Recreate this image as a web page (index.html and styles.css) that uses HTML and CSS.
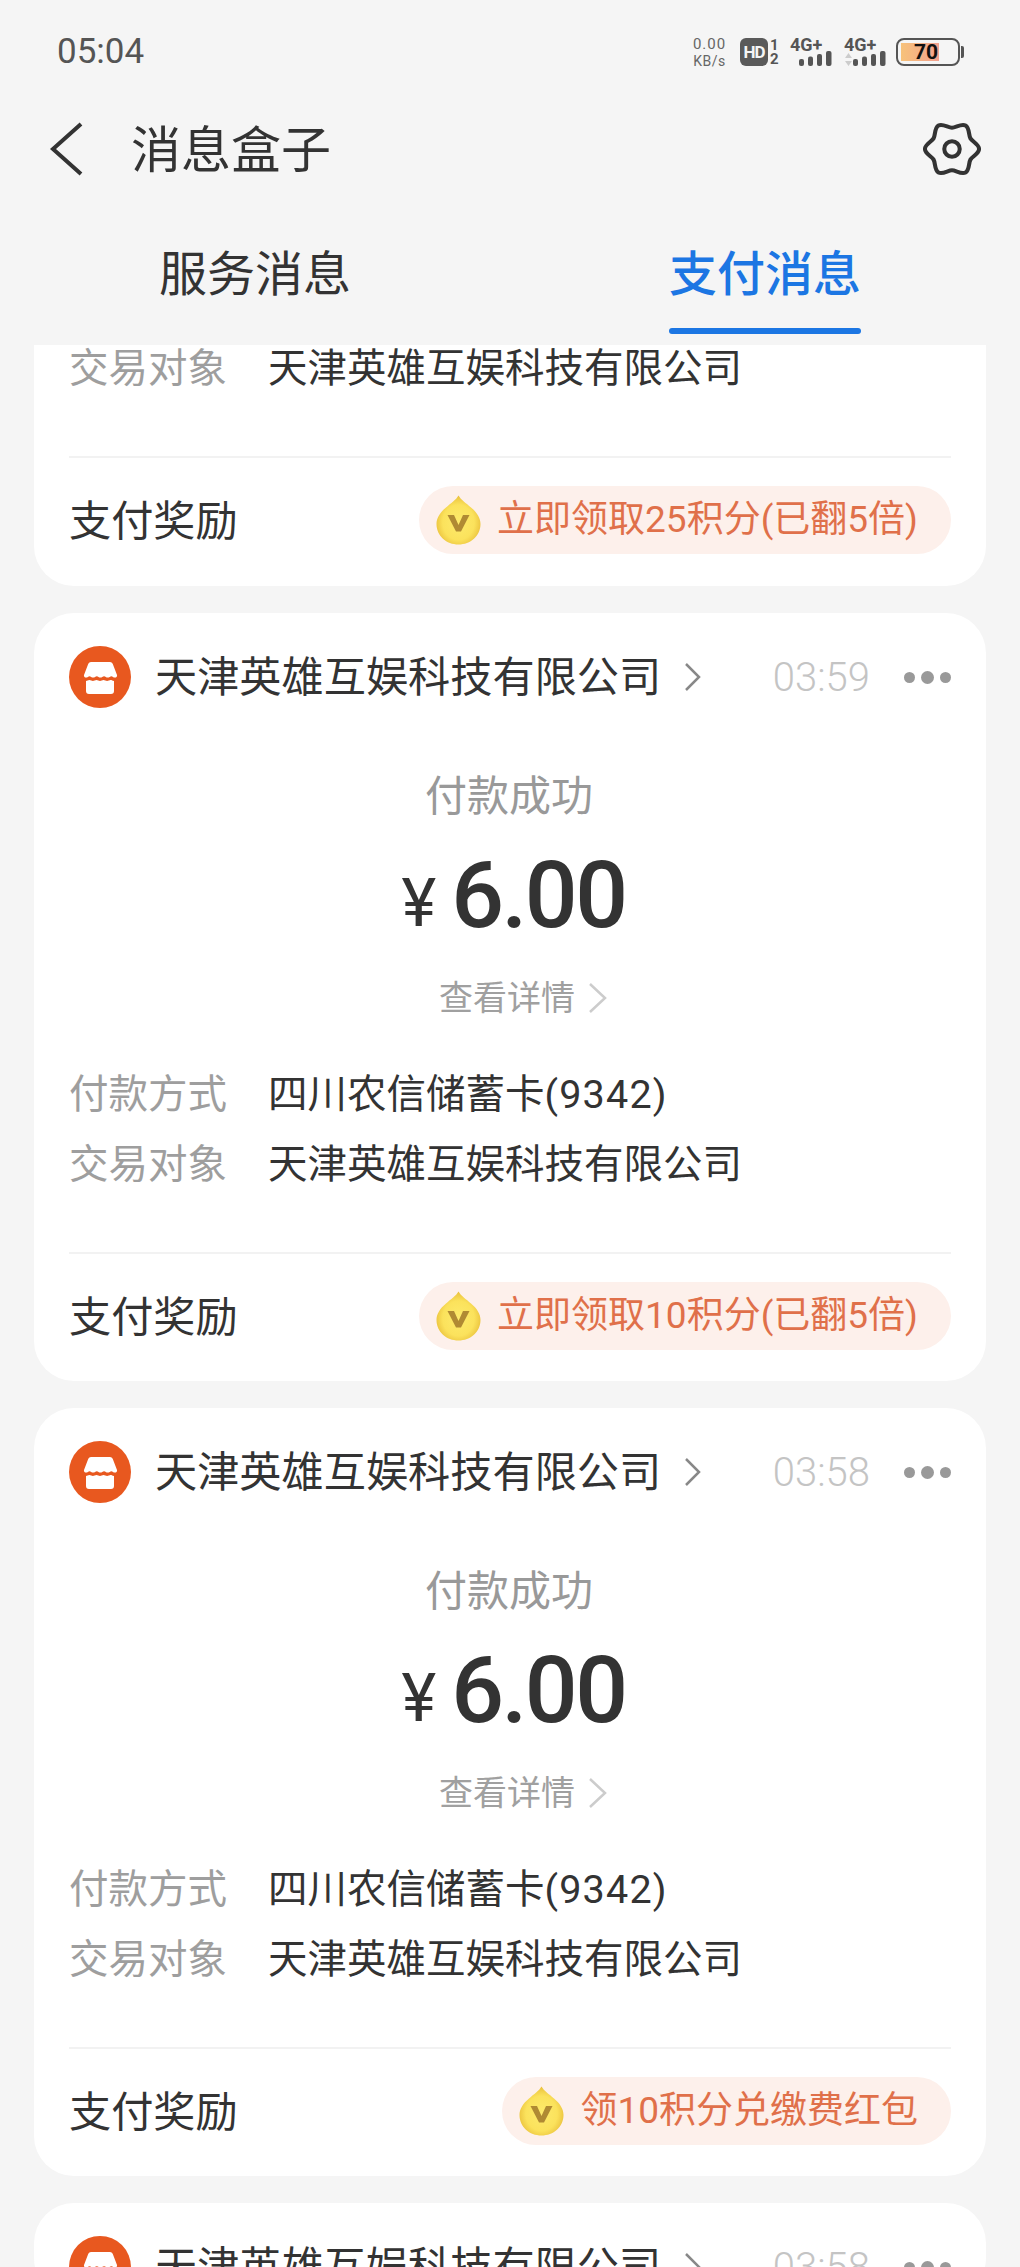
FILE: index.html
```html
<!DOCTYPE html>
<html lang="zh-CN">
<head>
<meta charset="utf-8">
<title>消息盒子</title>
<link rel="stylesheet" href="styles.css">
</head>
<body>
<svg class="defs" width="0" height="0" aria-hidden="true">
  <defs>
    <radialGradient id="coinFill" cx="50%" cy="55%" r="55%">
      <stop offset="0%" stop-color="#fdea6c"/>
      <stop offset="65%" stop-color="#fbe25c"/>
      <stop offset="100%" stop-color="#e9bf3a"/>
    </radialGradient>
    <symbol id="store" viewBox="0 0 62 62">
      <circle cx="31" cy="31" r="31" fill="#e8581f"/>
      <path d="M22 16h19a3 3 0 0 1 2.700 1.700L48 29c.4 1.400-.6 2.600-2 2.600-1.600 0-2.500-1.400-3.600-1.400s-2.200 1.400-3.700 1.400-2.300-1.400-3.600-1.400-2.300 1.400-3.700 1.400-2.400-1.400-3.600-1.400-2.200 1.400-3.700 1.400-2.500-1.400-3.600-1.400-2 1.400-3.500 1.400c-1.400 0-2.400-1.200-2-2.600l4.300-11.300A3 3 0 0 1 22 16z" fill="#fff"/>
      <path d="M17 35c1.200 0 2.100-1 3.400-1s2.400 1 3.500 1 2.400-1 3.600-1 2.300 1 3.500 1 2.300-1 3.500-1 2.400 1 3.600 1 2.400-1 3.500-1 1.900.7 3.400 1v10a3 3 0 0 1-3 3H20a3 3 0 0 1-3-3z" fill="#fff"/>
    </symbol>
    <symbol id="coin" viewBox="0 0 45 50">
      <path d="M22.500.5C25 5 30 8 35 12.500 41 17.500 44.500 23 44.500 29 44.500 41 34.500 49.500 22.500 49.500 10.500 49.500.5 41 .5 29 .5 23 4 17.500 10 12.500 15 8 20 5 22.500.5z" fill="url(#coinFill)"/>
      <path d="M11.500 20h6.500l4.500 10 4.500-10h6.500l-8.500 16.500h-5z" fill="#b08a33"/>
    </symbol>
    <symbol id="bars" viewBox="0 0 33 15">
      <rect x="0" y="8" width="5" height="7" rx="2" fill="#555"/>
      <rect x="9" y="5.500" width="5" height="9.500" rx="2" fill="#555"/>
      <rect x="18" y="3" width="5" height="12" rx="2" fill="#555"/>
      <rect x="27" y="0" width="5.500" height="15" rx="2" fill="#555"/>
    </symbol>
  </defs>
</svg>

<div class="screen">
  <header class="top">
    <div class="status">
      <span class="clock">05:04</span>
      <div class="status-icons">
        <div class="speed"><span class="speed-num">0.00</span><span class="speed-unit">KB/s</span></div>
        <div class="hd"><span class="hd-box">HD</span><span class="hd-sims"><span>1</span><span>2</span></span></div>
        <div class="signal"><span class="signal-label">4G+</span><svg class="signal-bars" width="33" height="15"><use href="#bars"/></svg></div>
        <div class="signal signal-second"><span class="signal-label">4G+</span><svg class="signal-arrows" width="7" height="13" viewBox="0 0 7 13"><path d="M3.500 0 7 5H0zM3.500 13 0 8h7z" fill="#ccc"/></svg><svg class="signal-bars" width="33" height="15"><use href="#bars"/></svg></div>
        <div class="battery"><div class="battery-body"><span class="battery-fill">70</span></div><span class="battery-tip"></span></div>
      </div>
    </div>

    <div class="titlebar">
      <svg class="back" width="36" height="54" viewBox="0 0 36 54"><path d="M32 2 4 27l28 25" fill="none" stroke="#333" stroke-width="4"/></svg>
      <h1 class="title">消息盒子</h1>
      <svg class="gear" width="58" height="58" viewBox="0 0 60 60"><path d="M58 30C58 34.900 51.050 37.540 49.050 41 47.050 44.460 48.240 51.800 44 54.250 39.760 56.700 34 52 30 52 26 52 20.240 56.700 16 54.250 11.760 51.800 12.950 44.460 10.950 41 8.950 37.540 2 34.900 2 30 2 25.100 8.950 22.460 10.950 19 12.950 15.540 11.760 8.200 16 5.750 20.240 3.300 26 8 30 8 34 8 39.760 3.300 44 5.750 48.240 8.200 47.050 15.540 49.050 19 51.050 22.460 58 25.100 58 30Z" fill="none" stroke="#333" stroke-width="4.200"/><circle cx="30" cy="30" r="8" fill="none" stroke="#333" stroke-width="4.200"/></svg>
    </div>

    <nav class="tabs">
      <div class="tab-cell"><span class="tab">服务消息</span></div>
      <div class="tab-cell"><span class="tab tab-active">支付消息</span></div>
    </nav>
  </header>

  <main class="list">
    <section class="card card-partial">
      <div class="rows">
        <div class="row"><span class="row-label">交易对象</span><span class="row-value">天津英雄互娱科技有限公司</span></div>
      </div>
      <div class="reward">
        <span class="reward-label">支付奖励</span>
        <span class="pill"><svg class="coin" width="45" height="50"><use href="#coin"/></svg>立即领取25积分(已翻5倍)</span>
      </div>
    </section>

    <section class="card">
      <div class="card-head">
        <svg class="store" width="62" height="62"><use href="#store"/></svg>
        <span class="merchant">天津英雄互娱科技有限公司</span>
        <svg class="head-chevron" width="17" height="30" viewBox="0 0 17 30"><path d="M2 2l13 13L2 28" fill="none" stroke="#888" stroke-width="2.500"/></svg>
        <span class="time">03:59</span>
        <span class="dots"><i></i><i class="dot-mid"></i><i></i></span>
      </div>
      <div class="pay">
        <div class="pay-status">付款成功</div>
        <div class="amount"><span class="currency">¥</span><span class="money">6.00</span></div>
        <div class="detail">查看详情<svg class="detail-chevron" width="19" height="32" viewBox="0 0 19 32"><path d="M2 2l15 14L2 30" fill="none" stroke="#ccc" stroke-width="2.500"/></svg></div>
      </div>
      <div class="rows">
        <div class="row"><span class="row-label">付款方式</span><span class="row-value">四川农信储蓄卡<span class="card-no">(9342)</span></span></div>
        <div class="row"><span class="row-label">交易对象</span><span class="row-value">天津英雄互娱科技有限公司</span></div>
      </div>
      <div class="reward">
        <span class="reward-label">支付奖励</span>
        <span class="pill"><svg class="coin" width="45" height="50"><use href="#coin"/></svg>立即领取10积分(已翻5倍)</span>
      </div>
    </section>

    <section class="card">
      <div class="card-head">
        <svg class="store" width="62" height="62"><use href="#store"/></svg>
        <span class="merchant">天津英雄互娱科技有限公司</span>
        <svg class="head-chevron" width="17" height="30" viewBox="0 0 17 30"><path d="M2 2l13 13L2 28" fill="none" stroke="#888" stroke-width="2.500"/></svg>
        <span class="time">03:58</span>
        <span class="dots"><i></i><i class="dot-mid"></i><i></i></span>
      </div>
      <div class="pay">
        <div class="pay-status">付款成功</div>
        <div class="amount"><span class="currency">¥</span><span class="money">6.00</span></div>
        <div class="detail">查看详情<svg class="detail-chevron" width="19" height="32" viewBox="0 0 19 32"><path d="M2 2l15 14L2 30" fill="none" stroke="#ccc" stroke-width="2.500"/></svg></div>
      </div>
      <div class="rows">
        <div class="row"><span class="row-label">付款方式</span><span class="row-value">四川农信储蓄卡<span class="card-no">(9342)</span></span></div>
        <div class="row"><span class="row-label">交易对象</span><span class="row-value">天津英雄互娱科技有限公司</span></div>
      </div>
      <div class="reward">
        <span class="reward-label">支付奖励</span>
        <span class="pill"><svg class="coin" width="45" height="50"><use href="#coin"/></svg>领10积分兑缴费红包</span>
      </div>
    </section>

    <section class="card">
      <div class="card-head">
        <svg class="store" width="62" height="62"><use href="#store"/></svg>
        <span class="merchant">天津英雄互娱科技有限公司</span>
        <svg class="head-chevron" width="17" height="30" viewBox="0 0 17 30"><path d="M2 2l13 13L2 28" fill="none" stroke="#888" stroke-width="2.500"/></svg>
        <span class="time">03:58</span>
        <span class="dots"><i></i><i class="dot-mid"></i><i></i></span>
      </div>
    </section>
  </main>
</div>
</body>
</html>
```

FILE: styles.css
```css
* { box-sizing: border-box; }

html, body {
  margin: 0;
  padding: 0;
  height: 100%;
  background: #f5f5f5;
}

body {
  font-family: Roboto, "Noto Sans CJK SC", sans-serif;
  color: #333;
  overflow: hidden;
}

.defs { position: absolute; }

.screen {
  width: 1020px;
  height: 2267px;
  display: flex;
  flex-direction: column;
  overflow: hidden;
}

.top { flex: none; }

/* status bar */
.status {
  height: 104px;
  padding: 0 56px 0 57px;
  display: flex;
  align-items: center;
  justify-content: space-between;
}

.clock {
  font-size: 35px;
  line-height: 40px;
  color: #555;
}

.status-icons {
  display: flex;
  align-items: center;
  height: 28px;
}

.speed {
  width: 35px;
  margin-right: 13px;
  display: flex;
  flex-direction: column;
  align-items: center;
  color: #666;
}
.speed-num {
  font-size: 15px;
  line-height: 18px;
  letter-spacing: 1px;
}
.speed-unit {
  font-size: 14px;
  line-height: 17px;
  letter-spacing: 0.500px;
}

.hd {
  display: flex;
  align-items: stretch;
  height: 28px;
  margin-right: 12px;
}
.hd-box {
  width: 28px;
  height: 28px;
  border-radius: 6px;
  background: #5a5a5a;
  color: #f5f5f5;
  font-size: 17px;
  font-weight: 700;
  line-height: 28px;
  text-align: center;
  letter-spacing: -1px;
}
.hd-sims {
  display: flex;
  flex-direction: column;
  justify-content: space-between;
  margin-left: 2px;
  width: 8px;
  font-size: 15px;
  font-weight: 700;
  line-height: 14px;
  color: #555;
}

.signal {
  width: 42px;
  height: 28px;
  display: flex;
  flex-direction: column;
  position: relative;
  margin-right: 12px;
}
.signal-second { margin-right: 10px; }
.signal-label {
  font-size: 18px;
  font-weight: 700;
  line-height: 13px;
  height: 13px;
  color: #555;
}
.signal-bars {
  display: block;
  margin-left: 9px;
}
.signal-arrows {
  position: absolute;
  left: 1px;
  top: 15px;
}

.battery {
  display: flex;
  align-items: center;
}
.battery-body {
  width: 64px;
  height: 28px;
  padding: 3px;
  border: 2px solid #555;
  border-radius: 8px;
  display: flex;
}
.battery-fill {
  width: 38px;
  height: 18px;
  padding-right: 1px;
  background: linear-gradient(90deg, #f7c27a 0%, #f2a08f 100%);
  color: #111;
  font-size: 21px;
  font-weight: 700;
  line-height: 18px;
  text-align: right;
}
.battery-tip {
  width: 3px;
  height: 12px;
  margin-left: 1px;
  background: #555;
  border-radius: 0 2px 2px 0;
}

/* title bar */
.titlebar {
  height: 90px;
  padding: 0 39px 0 49px;
  display: flex;
  align-items: center;
}
.back { flex: none; }
.title {
  flex: 1;
  margin: 3px 0 0 46px;
  font-size: 50px;
  font-weight: 400;
  line-height: 60px;
  color: #333;
}
.gear { flex: none; }

/* tabs */
.tabs {
  height: 151px;
  padding-top: 51px;
  display: grid;
  grid-template-columns: 1fr 1fr;
}
.tab-cell {
  display: flex;
  justify-content: center;
}
.tab {
  display: block;
  height: 89px;
  font-size: 48px;
  line-height: 60px;
  color: #333;
}
.tab-active {
  position: relative;
  color: #1c76e3;
  font-weight: 500;
}
.tab-active::after {
  content: "";
  position: absolute;
  left: 0;
  right: 0;
  bottom: 0;
  height: 6px;
  border-radius: 3px;
  background: #1c76e3;
}

/* list */
.list {
  flex: 1;
  min-height: 0;
  overflow: hidden;
  padding: 0 34px;
  display: flex;
  flex-direction: column;
  gap: 27px;
}

.card {
  flex: none;
  background: #fff;
  border-radius: 40px;
  padding: 33px 35px 0;
}
.card-partial {
  margin-top: -11px;
  padding-top: 0;
  padding-bottom: 1px;
  border-radius: 0 0 40px 40px;
}

.card-head {
  display: flex;
  align-items: center;
  height: 62px;
}
.store { flex: none; }
.merchant {
  margin: 2px 0 0 24px;
  font-size: 42.200px;
  line-height: 62px;
  color: #333;
  white-space: nowrap;
}
.head-chevron {
  flex: none;
  margin-left: 23px;
}
.time {
  margin: 2px 0 0 auto;
  font-size: 40px;
  font-weight: 300;
  line-height: 62px;
  color: #c4c4c4;
}
.dots {
  margin-left: 34px;
  display: flex;
  align-items: center;
  gap: 6px;
}
.dots i {
  display: block;
  width: 11px;
  height: 11px;
  border-radius: 50%;
  background: #999;
}
.dots .dot-mid {
  width: 13px;
  height: 13px;
}

.pay {
  padding-top: 59px;
  display: flex;
  flex-direction: column;
  align-items: center;
}
.pay-status {
  margin-right: 2px;
  font-size: 42px;
  line-height: 60px;
  color: #999;
}
.amount {
  margin: 22px 0 0 7px;
  height: 90px;
  display: flex;
  align-items: center;
  color: #333;
}
.currency {
  font-size: 66px;
  line-height: 70px;
  margin: 20px 15px 0 0;
}
.money {
  font-size: 93px;
  font-weight: 500;
  line-height: 90px;
  letter-spacing: -2.500px;
  padding-top: 4px;
}
.detail {
  margin: 35px 0 0 26px;
  height: 48px;
  display: flex;
  align-items: center;
  gap: 13px;
  font-size: 34px;
  line-height: 48px;
  color: #a0a0a0;
}

.rows {
  padding-top: 38px;
  padding-bottom: 52px;
  border-bottom: 2px solid #f2f2f2;
}
.card-partial .rows { padding-top: 0; }
.row {
  display: flex;
  height: 70px;
  align-items: center;
  font-size: 39.500px;
  line-height: 70px;
}
.row-label {
  width: 199px;
  flex: none;
  color: #9e9e9e;
}
.row-value { color: #333; }
.card-no { letter-spacing: 1.200px; }

.reward {
  height: 127px;
  padding: 28px 0 31px;
  display: flex;
  align-items: center;
  justify-content: space-between;
}
.reward-label {
  margin-top: 3px;
  font-size: 42.200px;
  line-height: 60px;
  color: #333;
}
.pill {
  height: 68px;
  padding: 0 33px 0 17px;
  border-radius: 34px;
  background: #fdf0eb;
  display: flex;
  align-items: center;
  gap: 16px;
  font-size: 37px;
  line-height: 68px;
  color: #e0704a;
  white-space: nowrap;
}
.coin { flex: none; }
```
